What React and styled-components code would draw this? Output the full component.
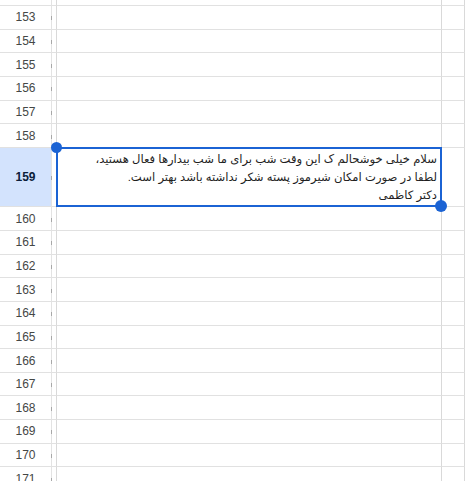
import React from "react";
import styled, { createGlobalStyle } from "styled-components";

const GlobalStyle = createGlobalStyle`
  html, body {
    margin: 0;
    padding: 0;
    background: #ffffff;
    overflow: hidden;
  }
  body {
    font-family: "Liberation Sans", Arial, sans-serif;
  }
`;

const ROW_H = 23.67;

const Viewport = styled.div`
  width: 465px;
  height: 481px;
  overflow: hidden;
`;

// simulated scroll position: row 152 is only partly visible
const Sheet = styled.div`
  margin-top: -${ROW_H - 6}px;
`;

const Row = styled.div`
  display: grid;
  grid-template-columns: 52px 5px 385px 1fr;
  height: ${(p) => p.height}px;
`;

const Header = styled.div`
  position: relative;
  display: flex;
  align-items: center;
  justify-content: center;
  box-sizing: border-box;
  border-bottom: 1px solid #e1e1e1;
  border-right: 1px solid #e3e3e3;
  background: ${(p) => (p.selected ? "#d3e3fd" : "#ffffff")};
  color: ${(p) => (p.selected ? "#0b1d3a" : "#444746")};
  font-weight: ${(p) => (p.selected ? 700 : 400)};
  font-size: 12px;

  &::after {
    content: "";
    position: absolute;
    right: -1px;
    top: 50%;
    width: 1px;
    height: 4px;
    margin-top: -1px;
    background: #a8a8a8;
  }
`;

const Gutter = styled.div`
  box-sizing: border-box;
  border-bottom: 1px solid #e1e1e1;
  border-right: 1px solid #d9d9d9;
`;

const Cell = styled.div`
  box-sizing: border-box;
  border-bottom: 1px solid #e1e1e1;
  border-right: 1px solid #d9d9d9;
`;

const SelectedCell = styled.div`
  position: relative;
  box-sizing: border-box;
  border: 2px solid #1b63d4;
  margin-left: -1px;
  margin-top: -1px;
  padding: 1px 3px 0 4px;
  direction: rtl;
  text-align: right;
  font-family: "Liberation Sans", "DejaVu Sans", Arial, sans-serif;
  font-size: 11.6px;
  line-height: 18px;
  color: #1f1f1f;

  &::before,
  &::after {
    content: "";
    position: absolute;
    width: 11px;
    height: 11px;
    border-radius: 50%;
    background: #1b63d4;
  }
  &::before {
    left: -7px;
    top: -7px;
  }
  &::after {
    right: -7px;
    bottom: -7px;
    width: 12px;
    height: 12px;
  }
`;

const Line = styled.div`
  white-space: nowrap;
`;

const rowsBefore = [152, 153, 154, 155, 156, 157, 158];
const rowsAfter = [160, 161, 162, 163, 164, 165, 166, 167, 168, 169, 170, 171];

const PlainRow = ({ n }) => (
  <Row height={ROW_H}>
    <Header>{n}</Header>
    <Gutter />
    <Cell />
    <Cell />
  </Row>
);

export default function App() {
  return (
    <Viewport>
      <GlobalStyle />
      <Sheet>
        {rowsBefore.map((n) => (
          <PlainRow key={n} n={n} />
        ))}
        <Row height={59.3}>
          <Header selected>159</Header>
          <Gutter />
          <SelectedCell>
            <Line>سلام خیلی خوشحالم ک این وقت شب برای ما شب بیدارها فعال هستید،</Line>
            <Line>لطفا در صورت امکان شیرموز پسته شکر نداشته باشد بهتر است.</Line>
            <Line>دکتر کاظمی</Line>
          </SelectedCell>
          <Cell />
        </Row>
        {rowsAfter.map((n) => (
          <PlainRow key={n} n={n} />
        ))}
      </Sheet>
    </Viewport>
  );
}
